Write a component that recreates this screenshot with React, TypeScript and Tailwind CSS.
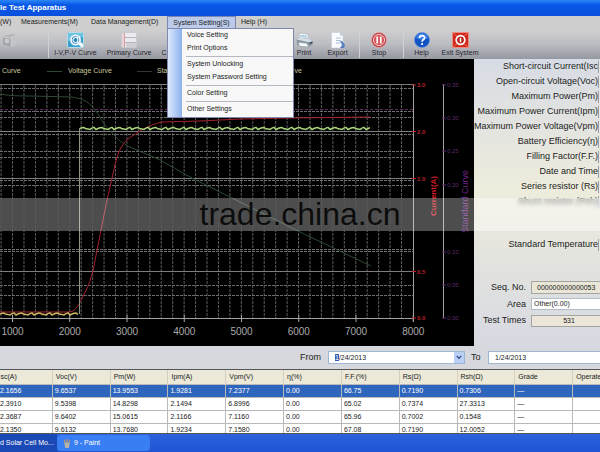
import React, { useEffect, useRef, useState } from 'react';

const menuItems = [
  { label: '(W)', width: 'w-[16px]' },
  { label: 'Measurements(M)', width: 'w-[70px]' },
  { label: 'Data Management(D)', width: 'w-[81px]' },
];

const dropdownGroups = [
  ['Voice Setting', 'Print Options'],
  ['System Unlocking', 'System Password Setting'],
  ['Color Setting'],
  ['Other Settings'],
];

const columns = ['sc(A)', 'Voc(V)', 'Pm(W)', 'Ipm(A)', 'Vpm(V)', 'η(%)', 'F.F.(%)', 'Rs(Ω)', 'Rsh(Ω)', 'Grade', 'Operate'];

const rows = [
  ['2.1656', '9.6537', '13.9553', '1.9281', '7.2377', '0.00', '66.75', '0.7190', '0.7306', '—', ''],
  ['2.3910', '9.5398', '14.8298', '2.1494', '6.8996', '0.00', '65.02', '0.7374', '27.3313', '—', ''],
  ['2.3687', '9.6402', '15.0615', '2.1166', '7.1160', '0.00', '65.96', '0.7002', '0.1548', '—', ''],
  ['2.1350', '9.6132', '13.7680', '1.9234', '7.1580', '0.00', '67.08', '0.7190', '12.0052', '—', ''],
];

const readings = [
  'Short-circuit Current(Isc',
  'Open-circuit Voltage(Voc)',
  'Maximum Power(Pm)',
  'Maximum Power Current(Ipm)',
  'Maximum Power Voltage(Vpm)',
  'Battery Efficiency(η)',
  'Filling Factor(F.F.)',
  'Date and Time',
  'Series resistor (Rs)',
  'Shunt resistor (Rsh)',
];

const CameraIcon = () => (
  <svg viewBox="0 0 16 16" className="h-4 w-4" aria-hidden="true">
    <path d="M1 5l4-2 9-1 1 10-5 3-9-3z" fill="#b4b5b9" />
    <path d="M1 5l8 1v9l-8-3z" fill="#a2a3a7" />
    <path d="M9 6l6-4v10l-5 3z" fill="#c3c4c8" />
    <circle cx="5" cy="9" r="2.4" fill="#c9cacd" />
    <path d="M1 5l8 1 6-4M9 6v9" stroke="#dcdde0" strokeWidth=".7" fill="none" />
  </svg>
);

const CurveIcon = () => (
  <svg viewBox="0 0 17 16" className="h-4 w-[17px]" aria-hidden="true">
    <rect x=".5" y=".5" width="16" height="15" rx="1" fill="#3b9fcb" stroke="#b8dbe8" />
    <path d="M1 1h15v4L1 9z" fill="#6fc3df" />
    <circle cx="8.5" cy="8" r="4.6" fill="#2a83bd" stroke="#eef8fc" strokeWidth="1.8" />
    <path d="M10.5 6.5a2.5 2.5 0 1 0 0 3M10.8 5v6" stroke="#fff" strokeWidth="1.1" fill="none" />
    <path d="M11 12l3 3h2v-3l-2-2z" fill="#f4fafc" />
  </svg>
);

const SheetIcon = () => (
  <svg viewBox="0 0 16 16" className="h-4 w-4" aria-hidden="true">
    <rect x=".5" y=".5" width="15" height="15" rx="1" fill="#e9e9ee" stroke="#c9c9d0" />
    <path d="M1 5.5h14M1 10.5h14" stroke="#b9b5bd" />
    <path d="M1 1h3v14H1z" fill="#ecd3d5" />
    <path d="M3.5 1v14" stroke="#c98488" strokeWidth=".7" />
    <path d="M5 11h10v4H5z" fill="#d0d0d7" />
  </svg>
);

const PrintIcon = () => (
  <svg viewBox="0 0 19 17" className="h-4 w-[19px]" aria-hidden="true">
    <path d="M4 1l9 1 1 6-10-1z" fill="#f2f6f9" stroke="#a7b2bb" strokeWidth=".6" />
    <path d="M1 8l3-2 11 1 3 3v3l-4 3-12-2z" fill="#87949e" />
    <path d="M1 8l3-2 11 1 3 3-4 1z" fill="#d4dde3" />
    <path d="M3 11l9 1 2 4-10-1z" fill="#f7fafb" stroke="#8d9aa4" strokeWidth=".6" />
    <path d="M5 3.5l7 .7M5 5l7 .7" stroke="#8ab0ce" strokeWidth=".8" />
    <path d="M15 11l3-1v2l-3 1z" fill="#3f4f5b" />
  </svg>
);

const ExportIcon = () => (
  <svg viewBox="0 0 16 17" className="h-[17px] w-4" aria-hidden="true">
    <path d="M1.5.5H10l3 3v12.500H1.5z" fill="#f9fbff" stroke="#c5cdda" strokeWidth=".6" />
    <path d="M10 .5v3h3z" fill="#bac8dc" />
    <path d="M6 6h5M6 8.500h5M6 11h4" stroke="#9fb6d8" strokeWidth=".9" />
    <path d="M10 9l2 0 3 4-1 3-4 0 2-3z" fill="#5a80bd" />
  </svg>
);

const StopIcon = () => (
  <svg viewBox="0 0 16 16" className="h-4 w-4" aria-hidden="true">
    <circle cx="8" cy="8" r="7.5" fill="#c23034" stroke="#dfa5a8" strokeWidth=".8" />
    <circle cx="8" cy="8" r="5.6" fill="#d7565a" stroke="#f0cdce" strokeWidth="1" />
    <path d="M6.2 4.500v7M9.800 4.500v7" stroke="#fff" strokeWidth="1.7" />
  </svg>
);

const HelpIcon = () => (
  <svg viewBox="0 0 16 16" className="h-4 w-4" aria-hidden="true">
    <circle cx="8" cy="8" r="7.6" fill="#1253c4" stroke="#6f9ae0" strokeWidth=".7" />
    <path d="M2 6a6.200 6.200 0 0 1 12 0c-3 2-8 2-12 0z" fill="#3f83e6" />
    <path d="M5.600 6c0-3.200 5-3.200 5-.3 0 1.900-2.500 1.800-2.500 4" stroke="#fff" strokeWidth="1.7" fill="none" />
    <circle cx="8.1" cy="12" r="1.1" fill="#fff" />
  </svg>
);

const ExitIcon = () => (
  <svg viewBox="0 0 17 16" className="h-4 w-[17px]" aria-hidden="true">
    <rect x=".5" y=".5" width="16" height="15" fill="#d02a1d" stroke="#ee8a7c" />
    <path d="M1 1l5 4M16 1l-5 4M1 15l5-4M16 15l-5-4" stroke="#e8786a" strokeWidth=".8" />
    <circle cx="8.5" cy="8" r="4.3" fill="#b8251a" stroke="#fff" strokeWidth="1.7" />
    <path d="M8.500 5.800v4.400" stroke="#fff" strokeWidth="1.5" />
  </svg>
);

interface ToolButtonProps {
  label: string;
  width: string;
  children?: React.ReactNode;
}

const ToolButton: React.FC<ToolButtonProps> = ({ label, width, children }) => (
  <button className={`flex h-[26px] shrink-0 flex-col items-center text-[7px] leading-[8px] whitespace-nowrap text-[#26272c] ${width}`}>
    <span className="flex h-[17px] items-center">{children}</span>
    {label}
  </button>
);

const Separator = () => <div className="h-[27px] w-px shrink-0 bg-[#cfd2d8]" />;

// Small saw-tooth noise on an otherwise flat trace.
function noisyLine(from: number, to: number, y: number) {
  const offsets = [0, -1, 0.6, -0.4, 1, -0.8, 0.3, 0.9, -1.1];
  let d = '';
  for (let x = from, i = 0; x <= to; x += 2, i++) {
    d += `${i === 0 ? 'M' : 'L'}${x} ${y + offsets[(i * 5) % 9]}`;
  }
  return d;
}

const minorX = Array.from({ length: 36 }, (_, i) => 1.1 + i * 11.44);
const majorX = Array.from({ length: 8 }, (_, i) => 12.5 + i * 57.25);
const dashedY = [88.5, 111.5, 117.5, 134.5, 151.5, 157.5, 180.5, 185.5, 249.5, 251.5, 285.5, 295.5];
const solidY = [84.5, 131.5, 178.5, 271.5];
const currentTicks = [['3.0', 85], ['2.0', 131.5], ['1.0', 178.5], ['0.5', 271.5], ['0.0', 318]] as const;
const curveTicks = [['0.35', 85], ['0.30', 118], ['0.25', 151], ['0.20', 185], ['0.10', 252], ['0.05', 285], ['0.00', 318]] as const;

const Chart = () => (
  <svg viewBox="0 83 474 263" className="block h-auto w-full font-['Liberation_Sans',sans-serif]">
    <g stroke="#5c5c5e" strokeWidth="1" strokeDasharray="3 1">
      {minorX.map((x) => (
        <path key={x} d={`M${x} 85V318`} />
      ))}
    </g>
    <g stroke="#6c6c6c" strokeWidth="1" strokeDasharray="3 1">
      {dashedY.map((y) => (
        <path key={y} d={`M0 ${y}H413`} />
      ))}
    </g>
    <path d="M0 109.500H413" stroke="#5d2a5e" strokeDasharray="3 2" />
    <g stroke="#7d7d7d">
      {solidY.map((y) => (
        <path key={y} d={`M0 ${y}H413`} />
      ))}
    </g>
    <path d="M0 198h413v33H0z" fill="#000" opacity=".8" />
    <path d="M0 318.500H413.500M413.500 84V322M443.500 84V318" stroke="#a0a0a0" fill="none" />
    {majorX.map((x, i) => (
      <g key={x}>
        <path d={`M${x} 315V322`} stroke="#a9a9a9" />
        <text x={x} y="335" fontSize="10" fill="#a8a8a8" textAnchor="middle">{(i + 1) * 1000}</text>
      </g>
    ))}
    {currentTicks.map(([label, y]) => (
      <g key={label}>
        <path d={`M412 ${y}h4`} stroke="#c3222a" />
        <text x="417" y={y + 2} fontSize="6" fontWeight="bold" fill="#b3222a">{label}</text>
      </g>
    ))}
    {curveTicks.map(([label, y]) => (
      <g key={label}>
        <path d={`M442 ${y}h4`} stroke="#5b2a66" />
        <text x="447" y={y + 2} fontSize="6" fill="#5b2a66">{label}</text>
      </g>
    ))}
    <text transform="translate(436 216) rotate(-90)" fontSize="8" fontWeight="bold" fill="#d81f25">Current(A)</text>
    <text transform="translate(468 233) rotate(-90)" fontSize="9" fill="#6d2484">Standard Curve</text>

    <path
      d="M0 94C12 96 20 96 30 96L72 97C85 99 90 103 96 111L104 124L115 136C120 142 125 144 130 147L160 160L190 177L230 197L300 232L371 266"
      stroke="#2c4a33"
      fill="none"
    />
    <path
      d="M0 312H70C76 311 79 304 82 298C88 288 90 281 93 271L100 235L107 200L115 165C118 152 122 144 128 139C138 132 148 125 162 122L200 121L240 119L290 118L370 117"
      stroke="#a3222d"
      fill="none"
    />
    <path d="M79.500 128V314" stroke="#8d9784" />
    <path d={noisyLine(0, 79, 314)} stroke="#c9b25f" strokeWidth="1.5" fill="none" />
    <path d={noisyLine(80, 371, 128.5)} stroke="#a8d27c" strokeWidth="1.5" fill="none" />
  </svg>
);

const SystemMenu = () => (
  <div
    role="menu"
    className="absolute top-[12px] left-0 z-20 w-[127px] border border-[#8088ad] bg-gradient-to-r from-[#dce9fd] from-0% via-[#8fb3ee] via-[11%] to-[#f8f8f8] to-[11%] pl-[18px]"
  >
    {dropdownGroups.map((group, i) => (
      <div key={group[0]} className={i === 0 ? 'pb-px' : 'border-t border-[#b4b8c2] py-px'}>
        {group.map((item) => (
          <button key={item} role="menuitem" className="block h-[13px] w-full pl-px text-left whitespace-nowrap">
            {item}
          </button>
        ))}
      </div>
    ))}
  </div>
);

export default function App() {
  const [fromDate, setFromDate] = useState('1/24/2013');
  const [toDate, setToDate] = useState('1/24/2013');
  const fromRef = useRef<HTMLInputElement>(null);

  // The month part is the selected segment when the window opens.
  useEffect(() => {
    fromRef.current?.focus();
    fromRef.current?.setSelectionRange(0, 1);
  }, []);

  return (
    <div className="w-full overflow-hidden bg-[#d6d8dd] font-['Liberation_Sans',Arial,sans-serif] text-[7px] text-[#222]">
      <header className="flex h-4 items-center bg-gradient-to-b from-[#2d86f5] via-[#0958e8] via-30% to-[#0a50dc]">
        <h1 className="text-[8px] leading-[10px] font-bold text-white">le Test Apparatus</h1>
      </header>

      <nav className="flex h-[13px] items-center bg-[#cfcfcf] whitespace-nowrap">
        {menuItems.map((item) => (
          <button key={item.label} className={`shrink-0 text-left first:pl-0 pl-[5px] ${item.width}`}>
            {item.label}
          </button>
        ))}
        <div className="relative shrink-0">
          <button className="h-[13px] w-[69px] border border-b-0 border-[#7c86b0] bg-[#bccbe9] text-center">
            System Setting(S)
          </button>
          <SystemMenu />
        </div>
        <button className="pl-[5px]">Help (H)</button>
      </nav>

      <div className="flex h-[30px] items-center bg-gradient-to-b from-[#d0d0d2] via-[#bcbdc2] to-[#9597a2] pt-px">
        <ToolButton label="" width="w-[19px]"><CameraIcon /></ToolButton>
        <div className="w-[29px]" />
        <Separator />
        <ToolButton label="I-V,P-V Curve" width="w-[53px]"><CurveIcon /></ToolButton>
        <ToolButton label="Primary Curve" width="w-[54px]"><SheetIcon /></ToolButton>
        <ToolButton label="C" width="w-[16px]" />
        <div className="w-[115px]" />
        <ToolButton label="Print" width="w-[34px]"><PrintIcon /></ToolButton>
        <ToolButton label="Export" width="w-[33px]"><ExportIcon /></ToolButton>
        <div className="w-[5px]" />
        <Separator />
        <ToolButton label="Stop" width="w-[38px]"><StopIcon /></ToolButton>
        <div className="w-[5px]" />
        <Separator />
        <ToolButton label="Help" width="w-[35px]"><HelpIcon /></ToolButton>
        <ToolButton label="Exit System" width="w-[42px]"><ExitIcon /></ToolButton>
      </div>

      <main className="relative flex">
        <section className="min-w-0 flex-1 bg-black">
          <div className="flex h-6 items-center whitespace-nowrap text-[#c9c79a]">
            <span className="w-[47px] pl-[2px]">Curve</span>
            <span className="mr-[6px] h-px w-[15px] bg-[#2c4a33]" />
            <span className="w-[69px]">Voltage Curve</span>
            <span className="mr-[5px] h-px w-[15px] bg-[#33343a]" />
            <span className="w-[106px]">Standard I-V Curve</span>
            <span>Stand Curve</span>
          </div>
          <Chart />
        </section>

        <aside className="w-[126px] bg-gradient-to-b from-[#d7dbe4] via-[#eeecdc] via-45% to-[#d6d9e1] text-[9px]">
          <ul>
            {readings.map((label) => (
              <li key={label} className="flex h-[15px] items-center justify-end whitespace-nowrap">
                {label}
                <span className="h-3 w-[2px] border-l border-[#9a9da5] bg-[#e9e9e4]" />
              </li>
            ))}
          </ul>
          <p className="mt-[28px] flex h-[15px] items-center justify-end whitespace-nowrap">
            Standard Temperature
            <span className="h-3 w-[2px] border-l border-[#9a9da5] bg-[#e9e9e4]" />
          </p>
          <div className="mt-[29px] grid grid-cols-[57px_1fr] items-center gap-y-[3px] text-right">
            <label htmlFor="seq" className="pr-[5px] whitespace-nowrap">Seq. No.</label>
            <input id="seq" readOnly value="000000000000053" className="h-[13px] w-full border border-r-0 border-[#a3a69f] bg-[#e9e6d8] pl-[5px] text-[7px]" />
            <label htmlFor="area" className="pr-[5px]">Area</label>
            <select id="area" className="h-[12px] w-full appearance-none border border-r-0 border-[#b1bccb] bg-white pl-[2px] text-[7px] leading-[10px]">
              <option>Other(0.00)</option>
            </select>
            <label htmlFor="times" className="pr-[5px] whitespace-nowrap">Test Times</label>
            <input id="times" readOnly value="531" className="h-[12px] w-full border border-r-0 border-[#a3a69f] bg-[#ece5d9] pl-[6px] text-center text-[7px]" />
          </div>
        </aside>

        <div className="absolute inset-x-0 top-[139px] flex h-[33px] items-center justify-center bg-white/30 text-[32px] leading-[33px] text-black/85">
          <div className="absolute inset-y-0 right-0 w-[126px] bg-white/20 backdrop-blur-[2px]" />
          trade.china.cn
        </div>
      </main>

      <div className="flex h-[23px] items-center text-[9px]">
        <label htmlFor="from" className="w-[328px] pr-[7px] text-right">From</label>
        <div className="relative w-[137px]">
          <input
            id="from"
            ref={fromRef}
            value={fromDate}
            onChange={(e) => setFromDate(e.target.value)}
            className="block h-[13px] w-full border border-[#9fb6d2] bg-white pl-[6px] text-[7px] outline-none selection:bg-[#2f5fb8] selection:text-white"
          />
          <button aria-label="Open calendar" className="absolute top-px right-px flex h-[11px] w-[10px] items-center justify-center bg-[#bcd0f5]">
            <svg viewBox="0 0 8 6" className="h-[5px] w-[6px]" aria-hidden="true">
              <path d="M1 1l3 3 3-3" stroke="#3a5590" strokeWidth="1.8" fill="none" />
            </svg>
          </button>
        </div>
        <label htmlFor="to" className="w-[23px] pl-[6px]">To</label>
        <input
          id="to"
          value={toDate}
          onChange={(e) => setToDate(e.target.value)}
          className="h-[13px] min-w-0 flex-1 border border-r-0 border-[#9fb6d2] bg-white pl-[6px] text-[7px] outline-none"
        />
      </div>

      <div className="h-[65px] overflow-hidden border-t border-b border-[#55565a] bg-white">
        <table className="-ml-[6px] w-[calc(100%+37px)] table-fixed border-collapse text-left leading-[10px]">
          <thead>
            <tr className="h-[14px] bg-[#ece9d8]">
              {columns.map((col) => (
                <th key={col} className="border-r border-[#d3d0c0] p-0 pl-[3px] font-normal first:pl-[6px]">{col}</th>
              ))}
            </tr>
          </thead>
          <tbody>
            {rows.map((row, i) => (
              <tr key={row[1]} className={i === 0 ? 'h-[13px] bg-[#2f66bd] text-white' : 'h-[13px]'}>
                {row.map((cell, j) => (
                  <td key={columns[j]} className="border border-[#b9b9b9] p-0 pl-[2px] first:pl-[5px]">{cell}</td>
                ))}
              </tr>
            ))}
          </tbody>
        </table>
      </div>

      <footer className="flex h-[18px] items-stretch bg-gradient-to-b from-[#2b62da] to-[#1f54d4] text-white">
        <button className="w-[57px] bg-[#1a48b4] text-left whitespace-nowrap">d Solar Cell Mo...</button>
        <button className="my-px flex w-[93px] items-center gap-[3px] rounded-sm bg-[#3a7ef3] pl-[6px]">
          <svg viewBox="0 0 8 10" className="h-[9px] w-[8px]" aria-hidden="true">
            <path d="M1 4h6l-1 6H2z" fill="#b8b4a8" />
            <path d="M2 4L1 1M4 4V0M6 4l1-3" stroke="#d69a5b" strokeWidth="1.2" />
          </svg>
          9 - Paint
        </button>
      </footer>
    </div>
  );
}
